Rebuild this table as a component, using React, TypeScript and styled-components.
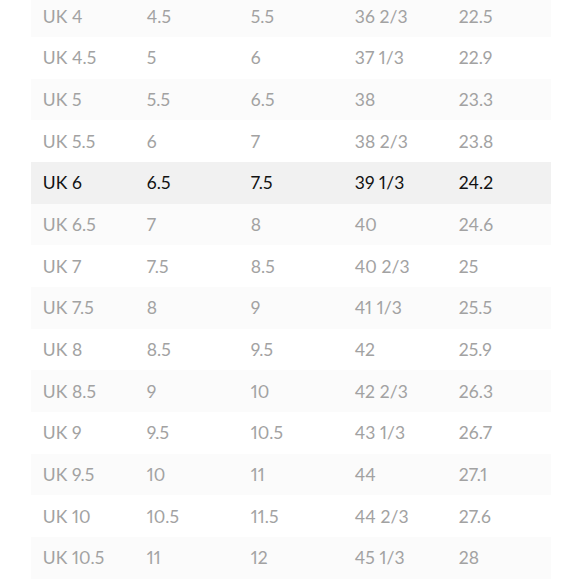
import React from 'react'
import styled, { createGlobalStyle } from 'styled-components'

const GlobalStyle = createGlobalStyle`
  html, body {
    margin: 0;
    padding: 0;
    background: #ffffff;
  }
  body {
    font-family: Lato, 'Open Sans', sans-serif;
    -webkit-font-smoothing: antialiased;
  }
`

type Shade = 'plain' | 'faint' | 'active'

const Page = styled.div`
  width: 580px;
  height: 580px;
  overflow: hidden;
`

const Table = styled.div`
  width: 520px;
  margin: -4.67px 0 0 30.5px;
  display: flex;
  flex-direction: column;
`

const Row = styled.div<{ shade: Shade }>`
  display: grid;
  grid-template-columns: repeat(5, 104px);
  height: 41.67px;
  align-items: center;
  background-color: ${({ shade }) => (shade === 'active' ? '#f1f1f1' : shade === 'faint' ? '#fbfbfb' : '#ffffff')};
  color: ${({ shade }) => (shade === 'active' ? '#121212' : '#a2a2a2')};
`

const Cell = styled.span`
  padding-left: 12.2px;
  font-size: 17.5px;
  font-weight: 400;
  letter-spacing: 0.1px;
  font-variant-numeric: proportional-nums;
  white-space: nowrap;
`

const rows: string[][] = [
  ['UK 4', '4.5', '5.5', '36 2/3', '22.5'],
  ['UK 4.5', '5', '6', '37 1/3', '22.9'],
  ['UK 5', '5.5', '6.5', '38', '23.3'],
  ['UK 5.5', '6', '7', '38 2/3', '23.8'],
  ['UK 6', '6.5', '7.5', '39 1/3', '24.2'],
  ['UK 6.5', '7', '8', '40', '24.6'],
  ['UK 7', '7.5', '8.5', '40 2/3', '25'],
  ['UK 7.5', '8', '9', '41 1/3', '25.5'],
  ['UK 8', '8.5', '9.5', '42', '25.9'],
  ['UK 8.5', '9', '10', '42 2/3', '26.3'],
  ['UK 9', '9.5', '10.5', '43 1/3', '26.7'],
  ['UK 9.5', '10', '11', '44', '27.1'],
  ['UK 10', '10.5', '11.5', '44 2/3', '27.6'],
  ['UK 10.5', '11', '12', '45 1/3', '28']
]

const ACTIVE = 4

function shadeFor(i: number): Shade {
  if (i === ACTIVE) return 'active'
  // striping picks up again after the selected row
  if (i < ACTIVE) return i % 2 === 0 ? 'faint' : 'plain'
  return i % 2 === 1 ? 'faint' : 'plain'
}

export default function App() {
  return (
    <Page>
      <GlobalStyle />
      <Table>
        {rows.map((row, i) => (
          <Row key={row[0]} shade={shadeFor(i)}>
            {row.map((value, j) => (
              <Cell key={j}>{value}</Cell>
            ))}
          </Row>
        ))}
      </Table>
    </Page>
  )
}
